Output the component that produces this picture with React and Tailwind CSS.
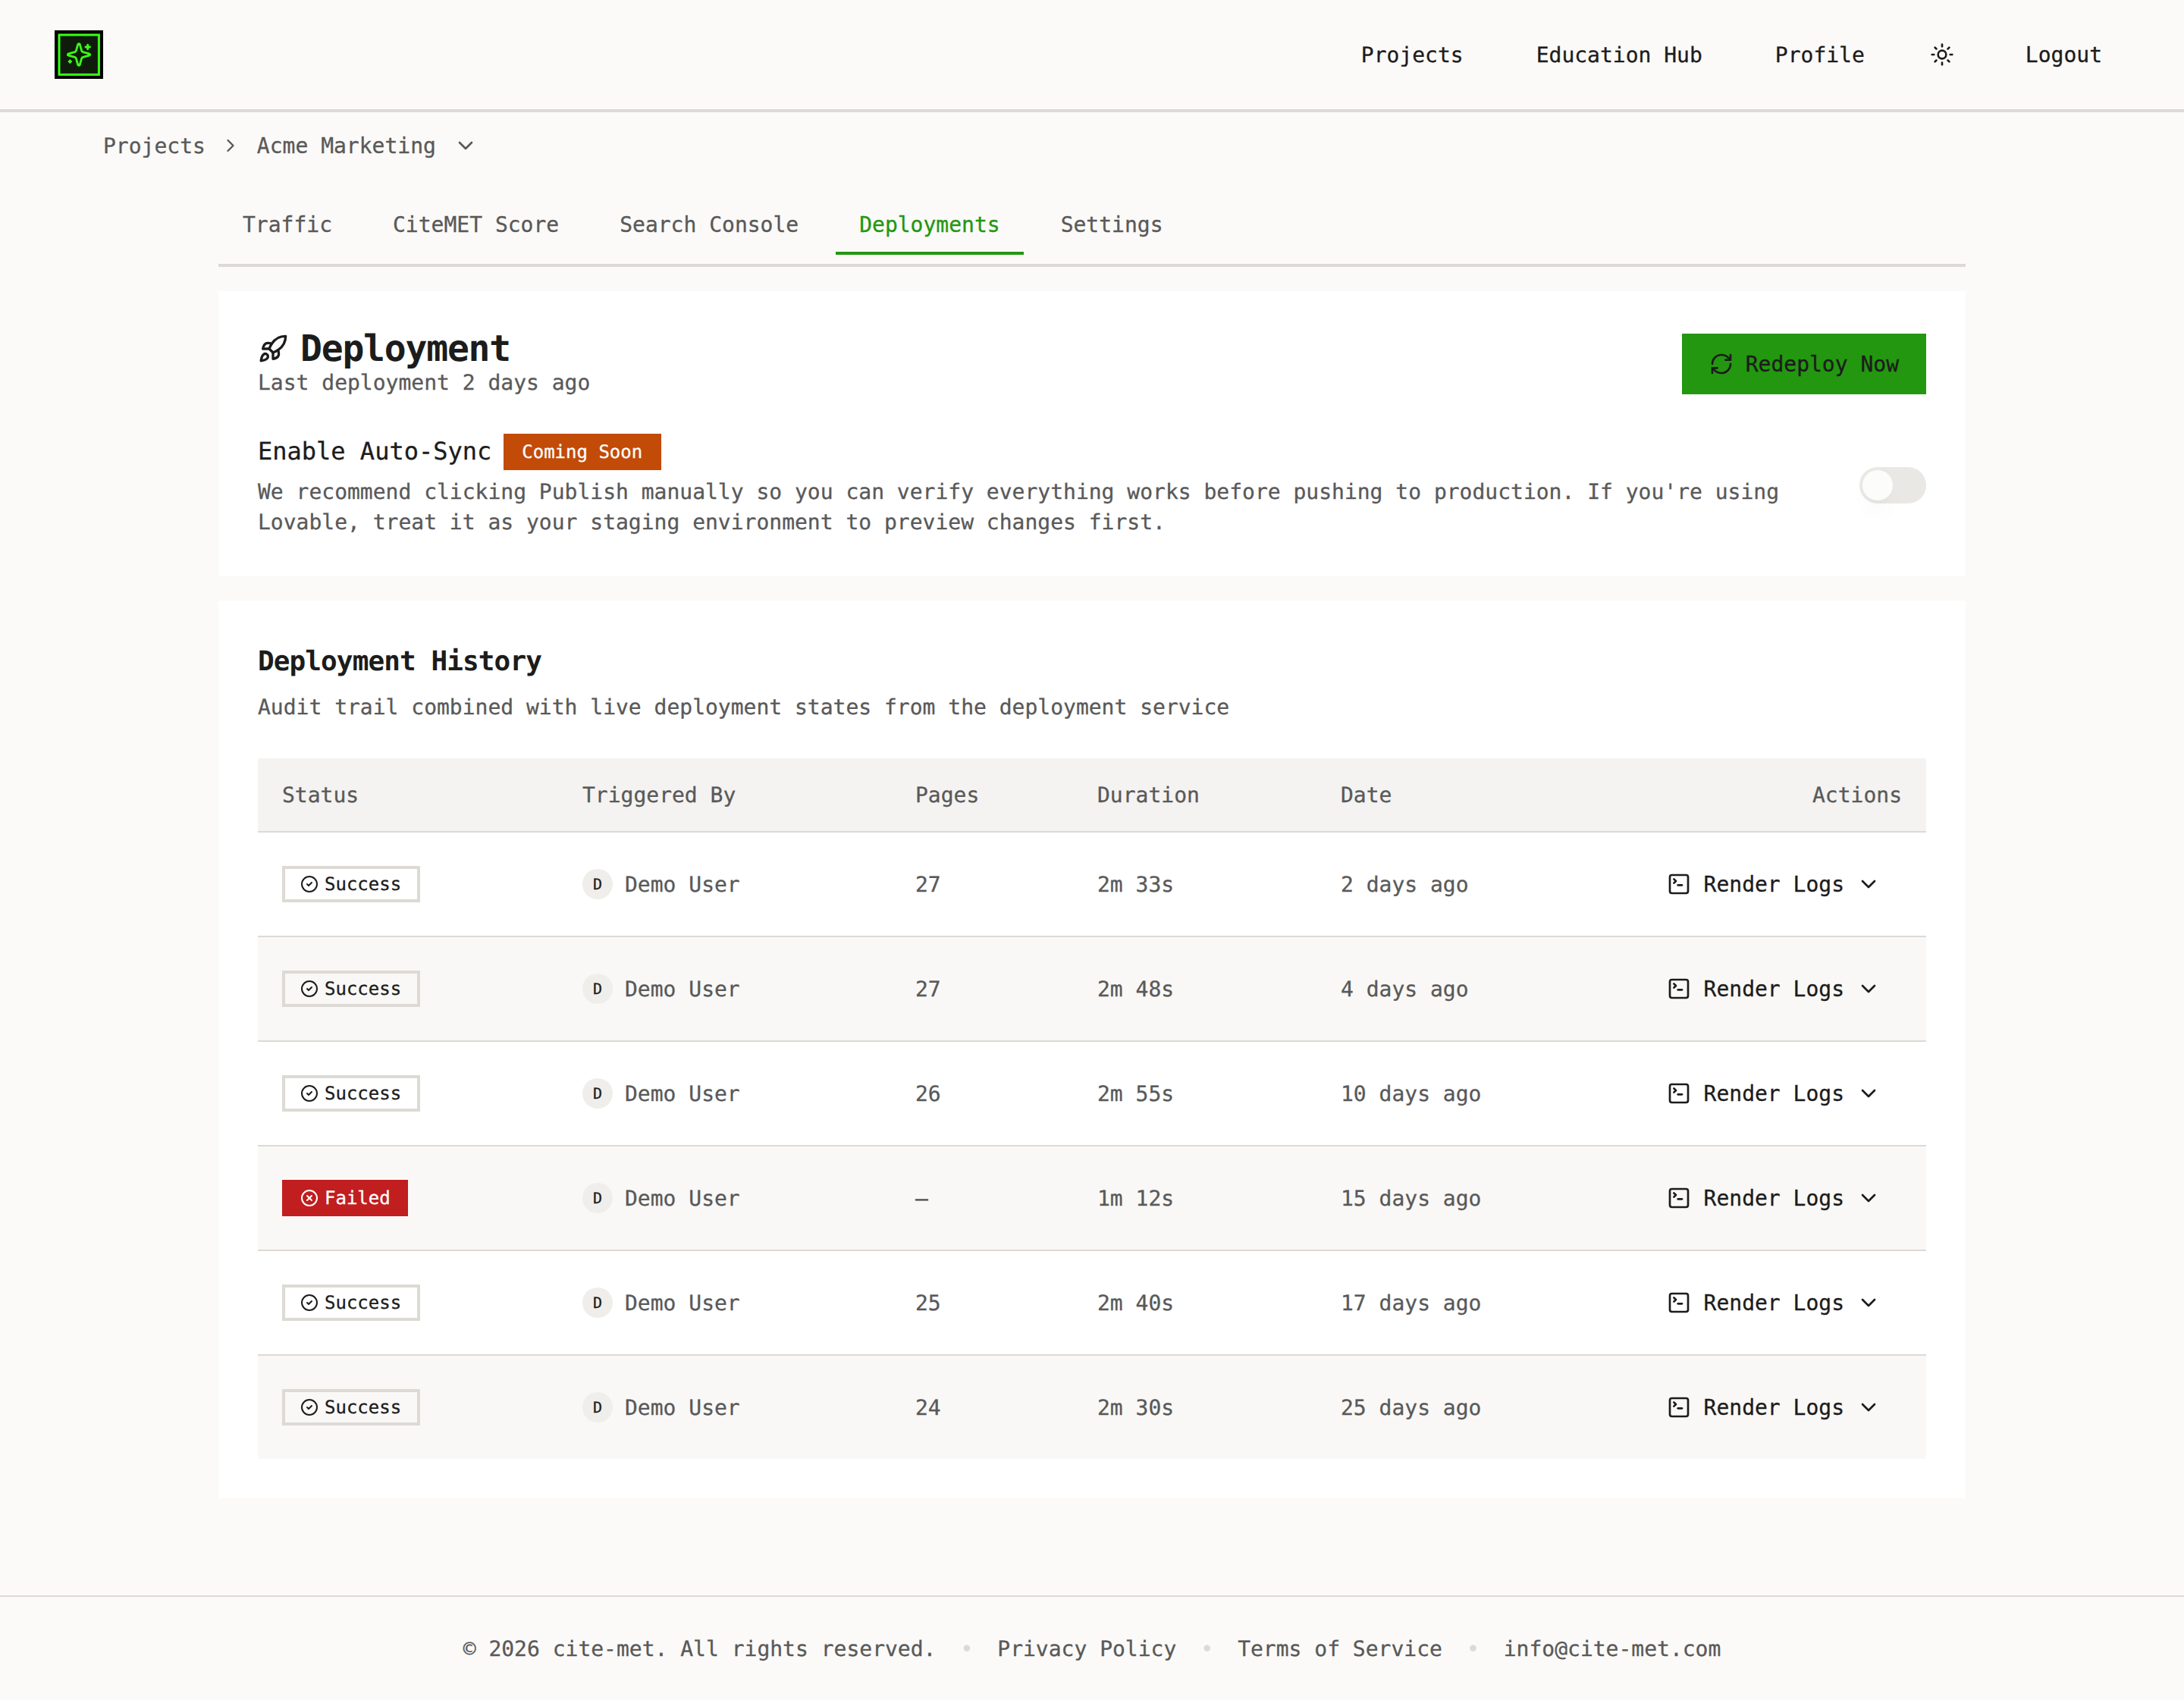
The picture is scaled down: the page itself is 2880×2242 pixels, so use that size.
import React from 'react';
import {
  ChevronDown,
  ChevronRight,
  CircleCheck,
  CircleX,
  RefreshCw,
  Rocket,
  SquareTerminal,
  Sun,
} from 'lucide-react';

const navLinks = ['Projects', 'Education Hub', 'Profile'];

const tabs = ['Traffic', 'CiteMET Score', 'Search Console', 'Deployments', 'Settings'];

const deployments = [
  { id: 1, status: 'success', user: 'Demo User', pages: '27', duration: '2m 33s', date: '2 days ago' },
  { id: 2, status: 'success', user: 'Demo User', pages: '27', duration: '2m 48s', date: '4 days ago' },
  { id: 3, status: 'success', user: 'Demo User', pages: '26', duration: '2m 55s', date: '10 days ago' },
  { id: 4, status: 'failed', user: 'Demo User', pages: '—', duration: '1m 12s', date: '15 days ago' },
  { id: 5, status: 'success', user: 'Demo User', pages: '25', duration: '2m 40s', date: '17 days ago' },
  { id: 6, status: 'success', user: 'Demo User', pages: '24', duration: '2m 30s', date: '25 days ago' },
];

const footerItems = [
  '© 2026 cite-met. All rights reserved.',
  'Privacy Policy',
  'Terms of Service',
  'info@cite-met.com',
];

function Logo() {
  return (
    <svg viewBox="0 0 64 64" className="w-16 h-16" fill="none">
      <rect width="64" height="64" fill="#000000" />
      <rect x="6" y="6" width="52.4" height="52.4" fill="#0f1c0c" stroke="#39ff14" strokeWidth="3" />
      <path
        d="M32 17.6c.7 0 1.1.4 1.3 1.100l2.300 8.100c.3 1 .9 1.600 1.900 1.900l8.100 2.100c1.500.4 1.500 2 0 2.400l-8.100 2.100c-1 .3-1.600.9-1.900 1.900l-2.300 8.100c-.4 1.500-2.200 1.500-2.600 0l-2.300-8.100c-.3-1-.9-1.600-1.900-1.900l-8.100-2.100c-1.500-.4-1.500-2 0-2.400l8.100-2.100c1-.3 1.600-.9 1.900-1.900l2.300-8.100c.2-.7.6-1.100 1.300-1.100Z"
        stroke="#39ff14"
        strokeWidth="2.8"
        strokeLinejoin="round"
      />
      <path d="M43.7 19.2v5.600M40.900 22h5.600" stroke="#39ff14" strokeWidth="2.8" strokeLinecap="round" />
      <path d="M20.3 39.8v2.600M19 41.100h2.600" stroke="#39ff14" strokeWidth="2.8" strokeLinecap="round" />
    </svg>
  );
}

function Header() {
  return (
    <header className="flex items-center justify-between h-[148px] px-[72px] border-b-4 border-[#dddad5]">
      <Logo />
      <nav className="flex items-center gap-8">
        {navLinks.map((link) => (
          <a key={link} href="#" className="px-8 pt-0.5">
            {link}
          </a>
        ))}
        <button className="flex items-center justify-center w-20 h-20 pr-[3px]">
          <Sun className="w-8 h-8" />
        </button>
        <button className="px-9 pt-0.5">Logout</button>
      </nav>
    </header>
  );
}

function StatusBadge({ status }) {
  if (status === 'failed') {
    return (
      <span className="flex items-center gap-2 w-[166px] h-12 px-5 border-4 border-[#c11e1f] bg-[#c11e1f] text-2xl text-white">
        <CircleX className="shrink-0 w-6 h-6" />
        Failed
      </span>
    );
  }
  return (
    <span className="flex items-center gap-2 w-[182px] h-12 px-5 border-4 border-[#dddad5] text-2xl text-[#1c1c1c]">
      <CircleCheck className="shrink-0 w-6 h-6" />
      Success
    </span>
  );
}

function DeploymentCard() {
  return (
    <section className="p-[52px] bg-white">
      <div className="flex items-center justify-between">
        <div className="h-[88px]">
          <h1 className="flex items-center gap-4 text-5xl leading-none font-bold tracking-tight [-webkit-text-stroke:0]">
            <Rocket className="w-10 h-10" />
            Deployment
          </h1>
          <p className="mt-px text-[#595959]">Last deployment 2 days ago</p>
        </div>
        <button className="flex items-center gap-4 h-20 px-9 bg-[#239710]">
          <RefreshCw className="w-8 h-8" />
          <span className="pt-0.5">Redeploy Now</span>
        </button>
      </div>

      <div className="flex items-center justify-between gap-16 mt-12">
        <div className="h-[136px]">
          <div className="flex items-center gap-4">
            <span className="pb-0.5 text-[32px] leading-[46px]">Enable Auto-Sync</span>
            <span className="flex items-center w-52 h-12 px-6 bg-[#c24b08] text-2xl text-white">Coming Soon</span>
          </div>
          <p className="mt-[9px] text-[#595959]">
            We recommend clicking Publish manually so you can verify everything works before pushing to
            production. If you're using Lovable, treat it as your staging environment to preview changes
            first.
          </p>
        </div>
        <button role="switch" aria-checked="false" className="shrink-0 w-[88px] h-12 p-1 rounded-full bg-[#e9e8e4]">
          <span className="block w-10 h-10 rounded-full bg-[#fcfcfa] shadow-[0_20px_30px_-6px_rgba(0,0,0,0.04),0_8px_12px_-8px_rgba(0,0,0,0.04)]" />
        </button>
      </div>
    </section>
  );
}

function HistoryCard() {
  return (
    <section className="mt-8 px-[52px] pt-[53px] pb-[52px] bg-white">
      <h2 className="text-4xl leading-[56px] font-bold tracking-tight [-webkit-text-stroke:0]">Deployment History</h2>
      <p className="mt-3 text-[#595959]">
        Audit trail combined with live deployment states from the deployment service
      </p>

      <table className="w-full mt-[47px] table-fixed border-separate border-spacing-0 text-left text-[#595959]">
        <thead>
          <tr className="h-[98px] bg-[#f4f3f1] [&>th]:border-b-2 [&>th]:border-[#dddad5] [&>th]:pt-0.5">
            <th className="w-[396px] px-8 font-normal">Status</th>
            <th className="w-[439px] px-8 font-normal">Triggered By</th>
            <th className="w-[240px] px-8 font-normal">Pages</th>
            <th className="w-[321px] px-8 font-normal">Duration</th>
            <th className="px-8 font-normal">Date</th>
            <th className="w-[424px] px-8 font-normal text-right">Actions</th>
          </tr>
        </thead>
        <tbody>
          {deployments.map((d) => (
            <tr
              key={d.id}
              className="h-[138px] even:bg-[#f9f8f6] last:h-[136px] [&>td]:border-b-2 [&>td]:border-[#dddad5] last:[&>td]:border-b-0"
            >
              <td className="px-8">
                <StatusBadge status={d.status} />
              </td>
              <td className="px-8">
                <div className="flex items-center gap-4">
                  <span className="flex items-center justify-center w-10 h-10 rounded-full bg-[#efeeea] text-xl text-[#1c1c1c]">
                    {d.user[0]}
                  </span>
                  <span className="pt-0.5">{d.user}</span>
                </div>
              </td>
              <td className="px-8 pt-0.5">{d.pages}</td>
              <td className="px-8 pt-0.5">{d.duration}</td>
              <td className="px-8 pt-0.5">{d.date}</td>
              <td className="px-8">
                <button className="flex items-center ml-auto px-7 text-[#1c1c1c]">
                  <SquareTerminal className="w-8 h-8 mr-[17px]" />
                  <span className="pt-0.5">Render Logs</span>
                  <ChevronDown className="w-8 h-8 ml-4" />
                </button>
              </td>
            </tr>
          ))}
        </tbody>
      </table>
    </section>
  );
}

export default function App() {
  return (
    <div className="flex flex-col min-h-screen bg-[#fbfaf8] font-['DejaVu_Sans_Mono',monospace] text-[28px] leading-[40px] text-[#1c1c1c] [text-rendering:geometricPrecision] [-webkit-text-stroke:0.3px]">
      <Header />

      <div className="flex items-center h-16 px-[136px] pt-6 text-[#595959]">
        <a href="#" className="pt-0.5">
          Projects
        </a>
        <ChevronRight className="w-7 h-7 ml-[19px] mr-[21px]" />
        <button className="flex items-center gap-[23px]">
          <span className="pt-0.5">Acme Marketing</span>
          <ChevronDown className="w-8 h-8" />
        </button>
      </div>

      <main className="w-[2304px] mx-auto mt-12">
        <div className="flex gap-4 pb-3 border-b-4 border-[#dddad5]">
          {tabs.map((tab) => (
            <button
              key={tab}
              className={`pt-[17px] pb-[15px] border-b-4 ${
                tab === 'Deployments'
                  ? 'mx-px px-[31px] border-[#239710] text-[#239710]'
                  : 'px-8 border-transparent text-[#595959]'
              }`}
            >
              {tab}
            </button>
          ))}
        </div>

        <div className="mt-8">
          <DeploymentCard />
          <HistoryCard />
        </div>
      </main>

      <footer className="flex items-center justify-center gap-8 mt-auto pt-[49px] pb-[47px] border-t-2 border-[#dddad5] text-[#595959]">
        {footerItems.map((item, i) => (
          <React.Fragment key={item}>
            {i > 0 && <span className="text-[#dddad5]">•</span>}
            <span>{item}</span>
          </React.Fragment>
        ))}
      </footer>
    </div>
  );
}
